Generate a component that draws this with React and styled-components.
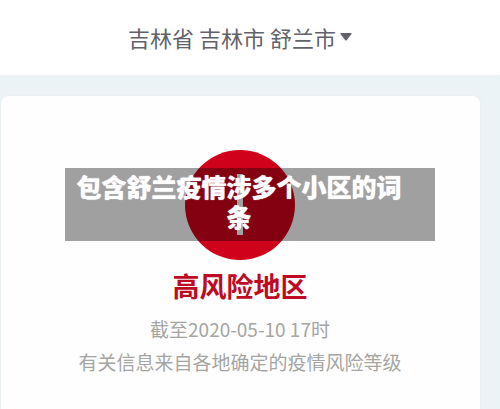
import React from 'react';
import styled, { createGlobalStyle, ThemeProvider } from 'styled-components';

const theme = {
  red: '#d0021b',
  redDark: '#bf0a24',
  ink: '#62626a',
  gray: '#a5a5a1',
  page: '#ecf3f6',
  line: '#ebefef',
  fontSize: {
    s: '19px',
    m: '22px',
    l: '25px',
    xl: '27px',
  },
};

const GlobalStyle = createGlobalStyle`
  *, *::before, *::after {
    box-sizing: border-box;
  }

  body {
    margin: 0;
    background-color: ${({ theme }) => theme.page};
    font-family: 'Noto Sans CJK SC', sans-serif;
  }
`;

const StyledPage = styled.div`
  position: relative;
  min-height: 100vh;
  display: flex;
  flex-direction: column;
  overflow: hidden;
`;

const StyledHeader = styled.header`
  display: flex;
  justify-content: center;
  padding: 21px 20px 22px 0;
  background-color: #fff;
  box-shadow: 0 1px 2px ${({ theme }) => theme.line};
`;

const StyledRegionButton = styled.button`
  display: flex;
  align-items: center;
  gap: 4px;
  padding: 0;
  border: 0;
  background: none;
  color: ${({ theme }) => theme.ink};
  font-family: inherit;
  font-size: ${({ theme }) => theme.fontSize.m};
  line-height: 32px;
  white-space: nowrap;
  cursor: pointer;
`;

const StyledCard = styled.main`
  flex: 1;
  display: flex;
  flex-direction: column;
  align-items: center;
  margin: 21px 20px 0 1px;
  padding: 54px 1px 30px 0;
  border-radius: 8px 8px 0 0;
  background-color: #fefefe;
  box-shadow: 0 0 3px #e4eaec;
  text-align: center;
`;

const StyledIcon = styled.svg`
  width: 110px;
  height: 110px;
`;

const StyledLevel = styled.h1`
  margin: 7px 0;
  color: ${({ theme }) => theme.redDark};
  font-size: ${({ theme }) => theme.fontSize.xl};
  font-weight: bold;
  line-height: 38px;
`;

const StyledNote = styled.p`
  margin: 0;
  color: ${({ theme }) => theme.gray};
  font-size: ${({ theme }) => theme.fontSize.s};
  line-height: 33px;
`;

const StyledCaption = styled.div`
  position: absolute;
  top: 168px;
  left: 13%;
  right: 13%;
  padding: 3px 22px 10px 0;
  background-color: rgba(0, 0, 0, 0.37);
  color: #fff;
  font-size: ${({ theme }) => theme.fontSize.l};
  font-weight: 900;
  line-height: 30px;
  text-align: center;
  text-shadow: 0 0 1px #fff;
`;

const RegionPicker = ({ region }) => {
  return (
    <StyledRegionButton type="button">
      {region}
      <svg width="12" height="8" viewBox="0 0 12 8" aria-hidden="true">
        <path d="M1 0h10q1.2 0 .5 1L6.9 7q-.9 1-1.8 0L.5 1Q-.2 0 1 0z" fill="currentColor" />
      </svg>
    </StyledRegionButton>
  );
};

const RiskIcon = () => {
  return (
    <StyledIcon viewBox="0 0 110 110" aria-hidden="true">
      <circle cx="55" cy="55" r="55" fill={theme.red} />
      <rect x="52" y="24" width="6" height="61" fill="#fff" />
    </StyledIcon>
  );
};

const App = () => {
  return (
    <ThemeProvider theme={theme}>
      <GlobalStyle />
      <StyledPage>
        <StyledHeader>
          <RegionPicker region="吉林省 吉林市 舒兰市" />
        </StyledHeader>
        <StyledCard>
          <RiskIcon />
          <StyledLevel>高风险地区</StyledLevel>
          <StyledNote>截至2020-05-10 17时</StyledNote>
          <StyledNote>有关信息来自各地确定的疫情风险等级</StyledNote>
        </StyledCard>
        <StyledCaption>包含舒兰疫情涉多个小区的词条</StyledCaption>
      </StyledPage>
    </ThemeProvider>
  );
};

export default App;
